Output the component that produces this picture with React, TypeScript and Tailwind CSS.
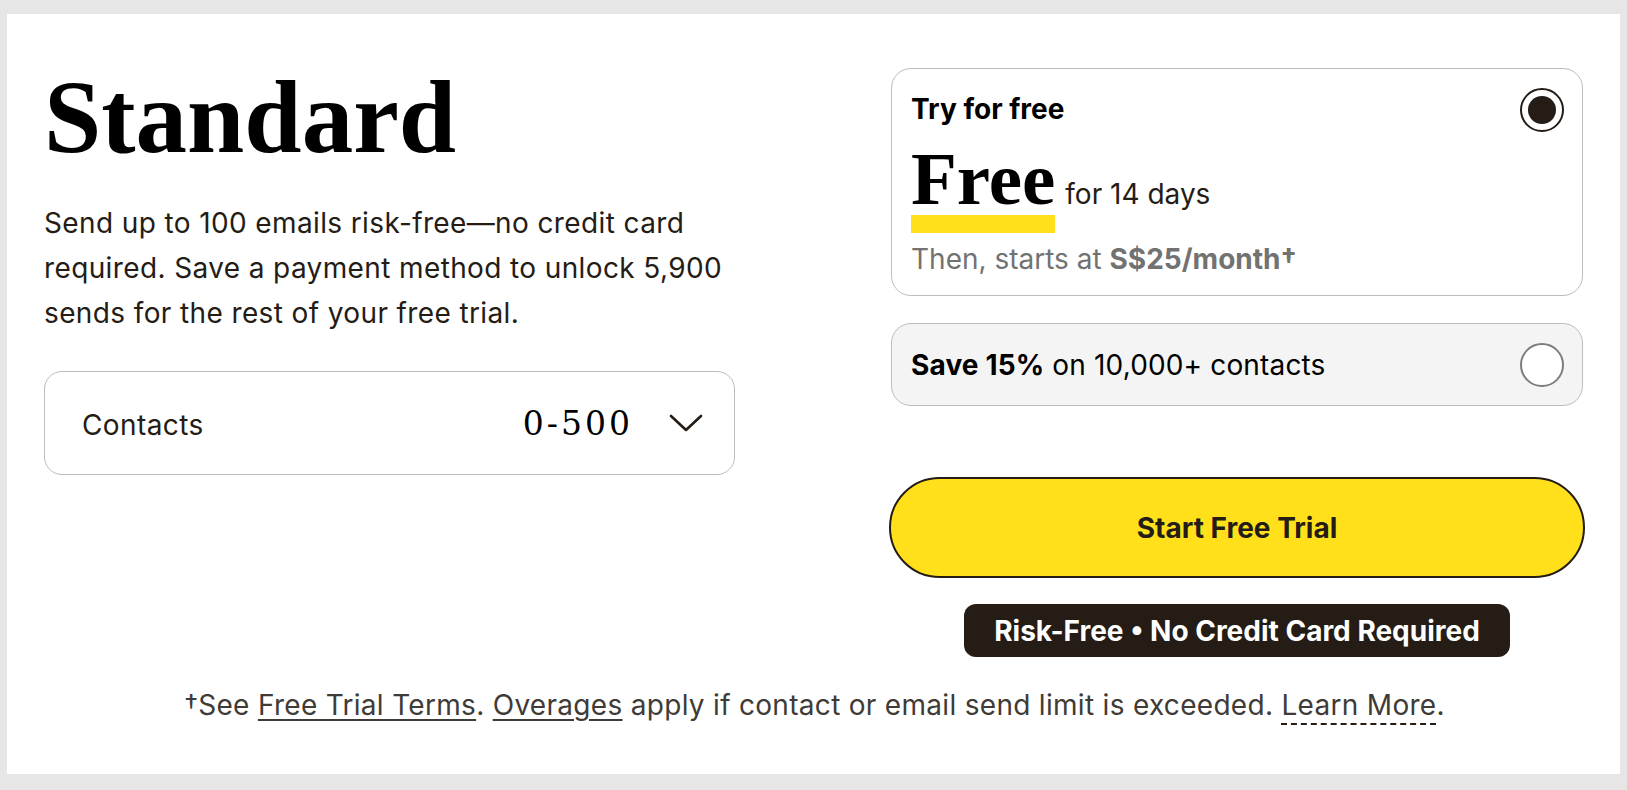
import { ReactNode } from "react";

const sans = "font-['Inter','Roboto','Liberation_Sans',sans-serif]";
const serif = "font-['Liberation_Serif','Times_New_Roman',serif]";

function Radio({ checked }: { checked?: boolean }) {
  if (checked) {
    return (
      <div className="flex h-[44px] w-[44px] shrink-0 items-center justify-center rounded-full border-[2.5px] border-[#241c15] bg-white">
        <div className="h-[28px] w-[28px] rounded-full bg-[#241c15]" />
      </div>
    );
  }
  return <div className="h-[44px] w-[44px] shrink-0 rounded-full border-2 border-[#7d7d7d] bg-white" />;
}

function Chevron() {
  return (
    <svg width="34" height="18" viewBox="0 0 34 18" fill="none">
      <polyline points="2,2 17,16 32,2" stroke="#241c15" strokeWidth="2.6" strokeLinecap="round" strokeLinejoin="round" />
    </svg>
  );
}

function Link({ children, dashed }: { children: ReactNode; dashed?: boolean }) {
  if (dashed) {
    return <span className="border-b-2 border-dashed border-[#241c15] pb-[1px]">{children}</span>;
  }
  return <span className="underline decoration-[1.5px] underline-offset-[4px]">{children}</span>;
}

export default function App() {
  return (
    <div className={`h-[790px] w-[1627px] bg-[#e6e6e6] px-[7px] pt-[14px] ${sans}`}>
      <div className="flex h-[760px] w-[1613px] flex-col bg-white pl-[37px] pr-[35px] pt-[54px] text-[#241c15]">
        <div className="flex justify-between">
          {/* left column */}
          <div className="w-[691px]">
            <h1 className={`${serif} text-[103px] font-bold leading-[98px] text-black`}>Standard</h1>
            <p className="mt-[35px] text-[28px] leading-[45px] tracking-[0.38px]">
              Send up to 100 emails risk-free—no credit card required. Save a payment method to unlock 5,900 sends
              for the rest of your free trial.
            </p>
            <div className="mt-[35px] flex h-[104px] items-center rounded-[18px] border-[1.5px] border-[#bdbdbd] pl-[37px] pr-[31px]">
              <span className="mt-[4px] text-[28px] tracking-[0.4px]">Contacts</span>
              <span className="ml-auto mt-[2px] font-['DejaVu_Serif',serif] text-[33px] tracking-[3px] text-black">0-500</span>
              <span className="ml-[36px] flex items-center">
                <Chevron />
              </span>
            </div>
          </div>

          {/* right column */}
          <div className="flex w-[696px] flex-col items-center">
            <div className="flex h-[228px] w-[692px] justify-between rounded-[20px] border-[1.5px] border-[#bdbdbd] pl-[19px] pr-[18px] pt-[22px]">
              <div>
                <div className="text-[28px] font-bold leading-[36px] text-black">Try for free</div>
                <div className="mt-[16px] flex items-baseline">
                  <span className="inline-flex flex-col">
                    <span className={`${serif} text-[75px] font-bold leading-[72px] text-black`}>Free</span>
                    <span className="h-[18px] w-full bg-[#ffe01b]" />
                  </span>
                  <span className="ml-[10px] text-[28px]">for 14 days</span>
                </div>
                <div className="mt-[8px] text-[28px] leading-[36px] text-[#727272]">
                  Then, starts at <span className="font-bold">S$25/month†</span>
                </div>
              </div>
              <div className="mt-[-3px]">
                <Radio checked />
              </div>
            </div>

            <div className="mt-[27px] flex h-[83px] w-[692px] items-center justify-between rounded-[20px] border-[1.5px] border-[#bdbdbd] bg-[#f4f4f4] pl-[19px] pr-[18px]">
              <span className="text-[28px] tracking-[0.15px] text-black">
                <span className="font-bold">Save 15%</span> on 10,000+ contacts
              </span>
              <Radio />
            </div>

            <button className="mt-[71px] flex h-[101px] w-[696px] items-center justify-center rounded-full border-2 border-[#241c15] bg-[#ffe01b] text-[28px] font-bold text-[#241c15]">
              Start Free Trial
            </button>

            <div className="mt-[26px] flex h-[53px] items-center rounded-[12px] bg-[#241c15] px-[30px] text-[28px] font-bold text-white">
              Risk-Free • No Credit Card Required
            </div>
          </div>
        </div>

        <p className="mt-[30px] text-center text-[28px] leading-[36px] tracking-[0.3px] text-[#403b37]">
          †See <Link>Free Trial Terms</Link>. <Link>Overages</Link> apply if contact or email send limit is exceeded.{" "}
          <Link dashed>Learn More</Link>.
        </p>
      </div>
    </div>
  );
}
